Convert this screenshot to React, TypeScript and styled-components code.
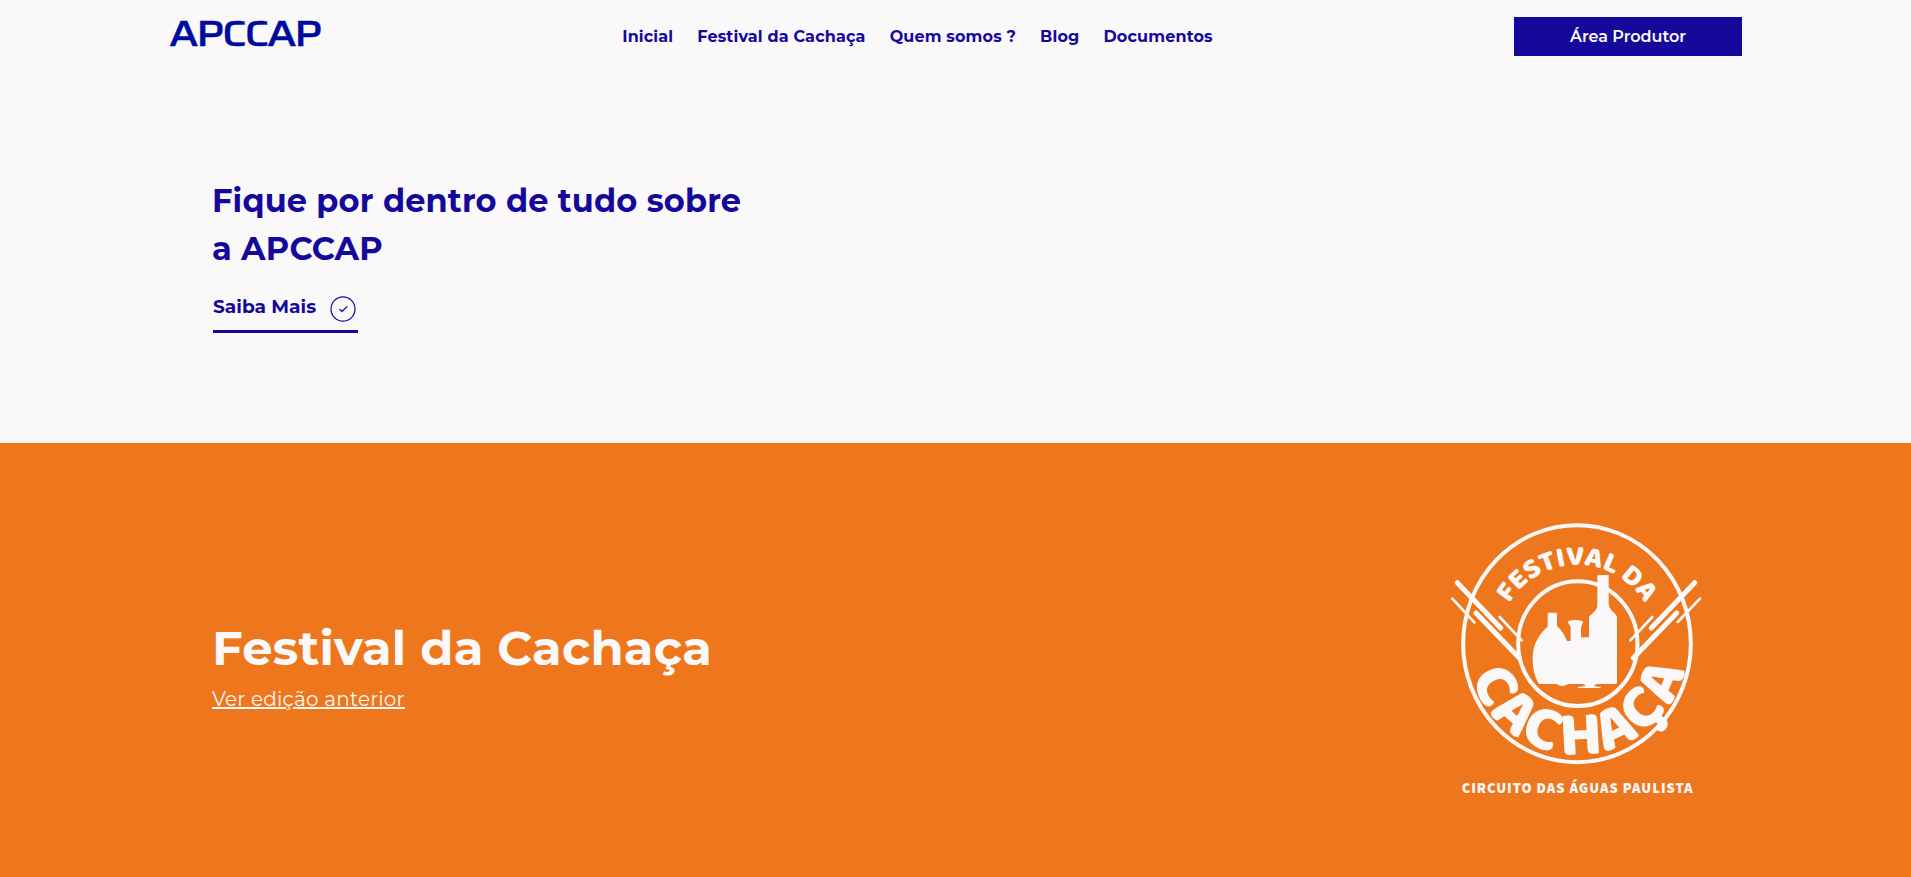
import React from "react";
import styled, { createGlobalStyle } from "styled-components";

const blue = "#14099b";
const light = "#faf8f9";
const orange = "#ee761c";

const GlobalStyle = createGlobalStyle`
  *, *::before, *::after { box-sizing: border-box; }
  body {
    margin: 0;
    background: ${light};
    color: ${blue};
    font-family: Montserrat, Inter, sans-serif;
  }
  h1, h2 { margin: 0; }
  a { color: inherit; text-decoration: none; }
`;

const Page = styled.div`
  height: 877px;
  display: flex;
  flex-direction: column;
  overflow: hidden;
`;

const Header = styled.header`
  height: 73px;
  flex: none;
  display: flex;
  align-items: center;
  justify-content: space-between;
  padding: 0 169px 0 170px;
`;

const Brand = styled.svg`
  width: 151px;
  height: 40px;
  margin-bottom: 7px;
  overflow: visible;
`;

const BrandText = styled.text`
  font: 500 36.5px Saira, "DejaVu Sans", sans-serif;
  letter-spacing: -2px;
  fill: #000ca0;
  stroke: #000ca0;
  stroke-width: 0.3;
`;

const Nav = styled.nav`
  display: flex;
  gap: 24px;
`;

const NavLink = styled.a`
  font-size: 16px;
  font-weight: 700;
  line-height: 24px;
  letter-spacing: 0.15px;
  white-space: nowrap;
`;

const ProducerButton = styled.button`
  width: 228px;
  height: 39px;
  padding: 0;
  border: 0;
  background: ${blue};
  color: ${light};
  font: 600 16px Montserrat, Inter, sans-serif;
`;

const Hero = styled.section`
  height: 370px;
  flex: none;
  padding: 104px 212px 0;
`;

const HeroTitle = styled.h1`
  width: 545px;
  font-size: 32px;
  font-weight: 700;
  line-height: 48px;
  letter-spacing: 0.16px;
`;

const MoreLink = styled.a`
  display: flex;
  width: 145px;
  height: 48px;
  margin-top: 12px;
  margin-left: 1px;
  align-items: center;
  justify-content: space-between;
  padding: 2px 2px 0 0;
  border-bottom: 3px solid ${blue};
  font-size: 18.6px;
  font-weight: 700;
  line-height: 24px;
`;

const MoreLabel = styled.span`
  margin-bottom: 3px;
`;

const CheckIcon = styled.svg`
  width: 26px;
  height: 26px;
`;

const Festival = styled.section`
  flex: 1;
  display: flex;
  align-items: center;
  justify-content: space-between;
  padding: 0 201px 0 212px;
  background: ${orange};
  color: ${light};
`;

const FestivalTitle = styled.h2`
  margin-top: 12px;
  font-size: 48px;
  font-weight: 700;
  line-height: 60px;
  letter-spacing: 0.2px;
`;

const EditionLink = styled.a`
  display: block;
  margin-top: 6px;
  font-size: 20px;
  line-height: 30px;
  letter-spacing: 0.2px;
  text-decoration: underline 2px;
`;

const Seal = styled.svg`
  width: 270px;
  height: 300px;
  overflow: visible;
`;

const SealText = styled.text<{ $size: number; $track?: number }>`
  font-family: "Baloo 2", "Open Sans", sans-serif;
  font-size: ${(p) => p.$size}px;
  font-weight: 800;
  letter-spacing: ${(p) => p.$track ?? 0}px;
  fill: ${light};
`;

const SealCaption = styled.text`
  font: 900 44px "Source Sans 3", "Open Sans", sans-serif;
  fill: ${light};
`;

const links = ["Inicial", "Festival da Cachaça", "Quem somos ?", "Blog", "Documentos"];

function FestivalSeal() {
  return (
    <Seal viewBox="0 0 810 900" role="img" aria-label="Festival da Cachaça">
      <defs>
        <path id="arc-top" d="M 204 517 A 237 237 0 1 1 618 517" />
        <path id="arc-bottom" d="M 84 350 A 331 331 0 1 0 738 350" />
      </defs>
      <g fill="none" stroke={light} strokeLinecap="round">
        <ellipse cx="411" cy="401" rx="341.5" ry="355.5" strokeWidth="12" />
        <ellipse cx="413.5" cy="401" rx="179" ry="187" strokeWidth="12" />
        <path strokeWidth="15" d="M52 218 182 354M764 218 634 354M108 309 238 444M710 309 580 444" />
        <path strokeWidth="8" d="M37 266 103 337M179 321 245 391M780 266 713 336M637 321 571 391" />
      </g>
      <g transform="translate(240 165)" fill={light}>
        <path d="M85 143H109Q111 143 111 146V183C125 196 134 210 141 228H152V189C151 181 144 176 144 169Q165 161 189 169C189 176 184 181 183 189V217H207V155C216 145 232 137 232 120V33Q232 30 235 30H263Q266 30 266 33V118C269 137 285 142 291 155V353Q291 357 287 357H57C42 330 38 310 38 275C39 235 60 204 83 185V146Q83 143 85 143Z" />
        <path d="M109 356Q127 370 145 356ZM188 357H230Q221 361 222 364L242 366V369H174V366L196 363Q198 360 188 357Z" />
      </g>
      <SealText $size={86}>
        <textPath href="#arc-top" startOffset="50%" textAnchor="middle" textLength="490">
          FESTIVAL DA
        </textPath>
      </SealText>
      <SealText $size={190} $track={6}>
        <textPath href="#arc-bottom" startOffset="50.2%" textAnchor="middle">
          <tspan dx="12 0 -4 18 -3 0 0">CACHAÇA</tspan>
        </textPath>
      </SealText>
      <SealCaption x="65" y="848" textLength="693">
        CIRCUITO DAS ÁGUAS PAULISTA
      </SealCaption>
    </Seal>
  );
}

export default function App() {
  return (
    <Page>
      <GlobalStyle />
      <Header>
        <Brand viewBox="0 0 151 40">
          <BrandText x="-1" y="32.8" textLength="151" lengthAdjust="spacingAndGlyphs">
            APCCAP
          </BrandText>
        </Brand>
        <Nav>
          {links.map((label) => (
            <NavLink key={label} href="#">
              {label}
            </NavLink>
          ))}
        </Nav>
        <ProducerButton>Área Produtor</ProducerButton>
      </Header>
      <Hero>
        <HeroTitle>Fique por dentro de tudo sobre a APCCAP</HeroTitle>
        <MoreLink href="#">
          <MoreLabel>Saiba Mais</MoreLabel>
          <CheckIcon viewBox="0 0 26 26" fill="none" stroke={blue}>
            <ellipse cx="13" cy="13" rx="12" ry="12.2" strokeWidth="1.2" />
            <path d="M9.8 13.4 12 15.5 17 10.6" strokeWidth="1.3" strokeLinecap="round" strokeLinejoin="round" />
          </CheckIcon>
        </MoreLink>
      </Hero>
      <Festival>
        <div>
          <FestivalTitle>Festival da Cachaça</FestivalTitle>
          <EditionLink href="#">Ver edição anterior</EditionLink>
        </div>
        <FestivalSeal />
      </Festival>
    </Page>
  );
}
